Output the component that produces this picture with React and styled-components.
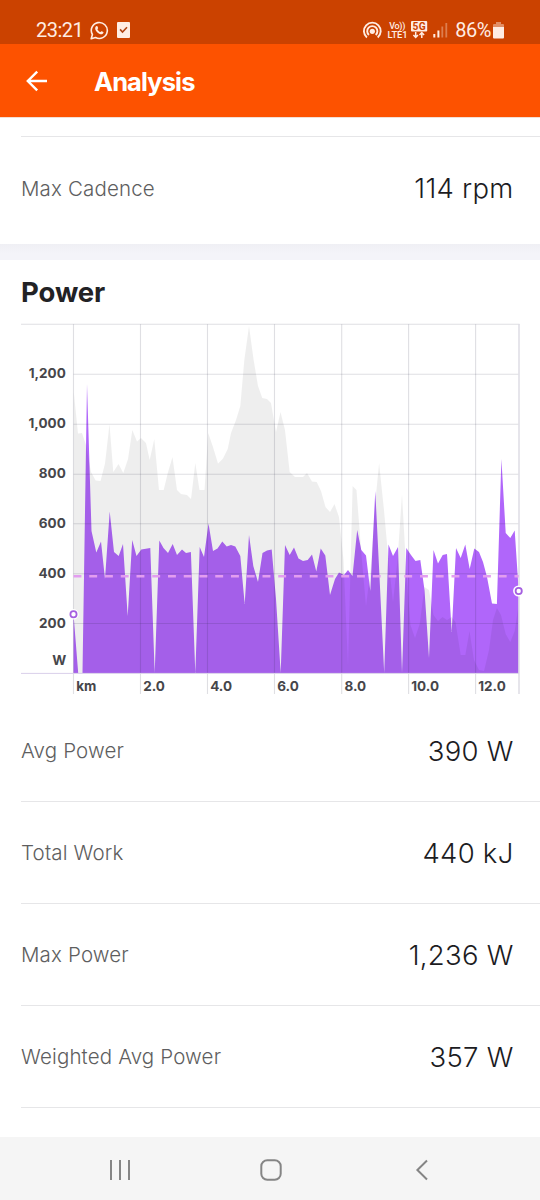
import React from 'react';
import styled, { createGlobalStyle } from 'styled-components';

const GlobalStyle = createGlobalStyle`
    body {
        margin: 0;
        background: #FFF;
    }
`;

// points are [x, y] on the 540px wide canvas, y starts at CHART_TOP
const CHART_TOP = 316;
const CHART_HEIGHT = 384;
const BASELINE = 673;
const AVG_LINE = 576.2;

const POWER = [
    [73.5, 614], [78.2, 673], [82.5, 673], [87, 384], [91.5, 531], [96.3, 552.5], [101, 541.5], [105, 579],
    [109.7, 511.5], [114, 552], [118.7, 556], [123, 544], [127.7, 616], [132.2, 540], [136.5, 556],
    [141.3, 549.5], [150.3, 548], [154.7, 673], [159.3, 540.5], [163.5, 548], [168, 553], [172.7, 544],
    [177, 555], [182, 549.5], [186, 553], [190.9, 552], [195.3, 673], [199.7, 547], [204, 557], [208.5, 523.5],
    [213, 551], [217.5, 548.5], [222.3, 541.5], [226.7, 546.5], [231, 545], [235.3, 546.5], [240.3, 556],
    [244.7, 604], [249, 535], [253.3, 566], [258, 582], [262.5, 553], [267, 550.5], [271.7, 549.5],
    [276, 599], [280.7, 673], [285, 545], [289.7, 555], [294, 547.5], [298.5, 558.5], [303, 561],
    [307.7, 560], [312, 554.5], [316.3, 571.5], [320.7, 548.5], [325.3, 555.5], [330, 595], [335, 579],
    [339, 572.5], [344, 575], [348, 570], [352.5, 576], [357.2, 530], [361.3, 550], [366, 555.5],
    [370.3, 591], [375.3, 491], [384.2, 673], [388.5, 544.5], [393, 556], [398, 547], [402, 673],
    [406.3, 548], [411, 555], [415.5, 561], [420.3, 560], [424.5, 590], [429, 658], [433.5, 550],
    [438, 563.5], [442.7, 555], [447, 554], [451.7, 632], [456, 548], [460.7, 558], [465.3, 544.5],
    [469.7, 569], [474.3, 548.5], [479, 552], [483, 562], [487, 577], [492, 603.5], [496.9, 604],
    [501.4, 459], [505.7, 533], [510.3, 538], [514.7, 530.5], [518.7, 591],
];

const ELEVATION = [
    [73.8, 392], [78, 433.5], [82, 433], [86, 445], [91, 472], [95.7, 480.5], [100.5, 481], [105, 463.5],
    [109.5, 424], [113.3, 472], [118.5, 464], [123.3, 473], [128, 459], [132.3, 430], [137, 441.5],
    [141, 438], [146, 443], [149.7, 460], [154.3, 439], [159, 490], [163.7, 490], [167.5, 474],
    [172.5, 457], [177, 490], [181, 494], [187, 495], [191, 499], [195.3, 463], [199.5, 490], [204.5, 490],
    [208.2, 433], [213, 447], [218, 463.5], [223, 458.5], [227.7, 449], [231, 433], [236, 420],
    [240.3, 406], [244.3, 360], [249, 326], [253.5, 359], [258, 386], [262.3, 398], [267, 399],
    [271, 403], [276, 432], [280.5, 412], [285, 430], [289.7, 472], [295, 477], [303, 477], [307, 473],
    [312, 481.5], [316.7, 482], [321, 491], [325.5, 507], [330, 512], [334.5, 504], [339, 517],
    [343.5, 560], [348, 665], [352.6, 486], [356.5, 490], [361.5, 555], [366, 606], [370.5, 570],
    [375, 505], [379.1, 463], [384, 510], [388.5, 560], [393, 602], [397.5, 560], [402, 494],
    [406.5, 575], [410.5, 625], [415, 638], [419.7, 624], [424.5, 587], [429, 590], [433.5, 615],
    [438, 621], [442.5, 617], [447, 620], [451.7, 617], [455.5, 622], [460.7, 655], [465.3, 655],
    [469.5, 631], [474, 660], [479, 670], [484, 671], [489, 650], [493, 620], [496.9, 608],
    [501, 615], [505.7, 634], [510.3, 642], [514.7, 631], [518.7, 604],
];

const Y_TICKS = [
    { y: 374.2, label: '1,200' },
    { y: 424.3, label: '1,000' },
    { y: 474.2, label: '800' },
    { y: 523.7, label: '600' },
    { y: 573.7, label: '400' },
    { y: 623.5, label: '200' },
];

const X_TICKS = [
    { x: 73.5, label: 'km' },
    { x: 140.5, label: '2.0' },
    { x: 207.5, label: '4.0' },
    { x: 274.5, label: '6.0' },
    { x: 341.7, label: '8.0' },
    { x: 408.6, label: '10.0' },
    { x: 475.6, label: '12.0' },
];

const STATS = [
    { label: 'Avg Power', value: '390 W' },
    { label: 'Total Work', value: '440 kJ' },
    { label: 'Max Power', value: '1,236 W' },
    { label: 'Weighted Avg Power', value: '357 W' },
];

const toArea = points => `M73.5 ${BASELINE} L${points.map(p => p.join(' ')).join(' L')} L518.7 ${BASELINE} Z`;

const Screen = styled.div`
    width: 540px;
    height: 1200px;
    display: flex;
    flex-direction: column;
    overflow: hidden;
    background: #FFF;
    font-family: Inter, "Liberation Sans", sans-serif;
`;

const StatusBar = styled.div`
    height: 44px;
    box-sizing: border-box;
    padding: 16px 36px 0 36px;
    display: flex;
    justify-content: space-between;
    background-color: #CB4200;
    color: #FFEDE3;
    font-family: Roboto, sans-serif;
    font-size: 20px;
    line-height: 28px;
`;

const StatusGroup = styled.div`
    display: flex;
    height: 28px;
    align-items: center;
    svg {
        display: block;
    }
`;

const Clock = styled.span`
    width: 54px;
    letter-spacing: -0.5px;
`;

const Battery = styled.span`
    margin: 0 2px 0 7px;
    letter-spacing: -0.5px;
`;

const Spacer = styled.span`
    width: 8px;
`;

const AppBar = styled.div`
    height: 74px;
    flex: none;
    display: flex;
    align-items: center;
    padding-left: 26px;
    background-color: #FD5200;
    border-bottom: 1px solid #F3DED4;
    box-sizing: border-box;
    color: #FFF;
`;

const Title = styled.h1`
    margin: 2px 0 0 46px;
    font-size: 25.5px;
    font-weight: 700;
    letter-spacing: -0.9px;
    line-height: 30px;
`;

const Content = styled.div`
    flex: 1;
    min-height: 0;
    padding-top: 18px;
`;

const StatRow = styled.div`
    height: ${props => (props.$first ? 108 : 102)}px;
    box-sizing: border-box;
    margin-left: 21px;
    padding-right: 27px;
    padding-bottom: ${props => (props.$first ? 5 : 0)}px;
    display: flex;
    align-items: center;
    justify-content: space-between;
    border-top: ${props => (props.$first ? '1px solid #E6E6E8' : 'none')};
    border-bottom: ${props => (props.$first ? 'none' : '1px solid #E6E6E8')};
`;

const StatLabel = styled.span`
    color: #5E5E60;
    font-size: 20.5px;
    font-weight: 350;
    letter-spacing: 0.15px;
`;

const StatValue = styled.span`
    color: #1C1C1F;
    font-size: 27.5px;
    font-weight: 340;
    letter-spacing: 0.25px;
    margin-right: -0.5px;
`;

const SectionGap = styled.div`
    height: 16px;
    background: linear-gradient(#EFEFF4, #F4F4F9 60%);
`;

const SectionTitle = styled.h2`
    margin: 0;
    height: 56px;
    box-sizing: border-box;
    padding: 16px 0 0 21px;
    color: #222225;
    font-size: 27.5px;
    font-weight: 700;
    line-height: 33px;
    letter-spacing: -0.1px;
`;

const Chart = styled.svg`
    display: block;
    text {
        fill: #46464A;
        font-size: 13.5px;
        font-weight: 700;
    }
`;

const NavBar = styled.div`
    height: 63px;
    flex: none;
    display: flex;
    align-items: center;
    justify-content: space-between;
    padding: 3px 111px 0 109px;
    box-sizing: border-box;
    background-color: #F5F5F5;
`;

const HomeButton = styled.span`
    height: 24px;
    margin-right: 4px;
`;

const WhatsAppIcon = () => (
    <svg width="19" height="19" viewBox="0 0 19 19" fill="none" stroke="#FFEDE3">
        <path d="M1.2 17.7 L2.4 13.5 A8 8 0 1 1 5.5 16.5 Z" strokeWidth="1.6" strokeLinejoin="round" />
        <path
            d="M6.2 5.3 C6.8 4.8 7.3 4.9 7.6 5.6 L8.1 6.9 C8.2 7.4 7.3 7.9 7.5 8.4 C8.1 9.6 9.1 10.5 10.4 11 C10.9 11.1 11.3 10.1 11.8 10.3 L13.3 11.1 C13.8 11.5 13.3 12.7 12.4 13.1 C10.9 13.7 8.6 12.7 7.1 11.2 C5.5 9.6 4.2 6.8 6.2 5.3 Z"
            fill="#FFEDE3"
            stroke="none"
        />
    </svg>
);

const TaskIcon = () => (
    <svg width="13" height="16" viewBox="0 0 13 16">
        <rect width="13" height="16" rx="1" fill="#FFEDE3" />
        <path d="M3.1 7.4 L5.5 10 L10 5.2" fill="none" stroke="#B14312" strokeWidth="1.6" />
    </svg>
);

const StatusIcons = () => (
    <svg width="86" height="22" viewBox="362 19 86 22" fill="none" stroke="#FFEDE3">
        <circle cx="372.3" cy="31.3" r="2.6" fill="#FFEDE3" stroke="none" />
        <path d="M368.9 35 A5.1 5.1 0 1 1 375.7 35" strokeWidth="1.9" />
        <path d="M366.9 37.5 A8.4 8.4 0 1 1 377.7 37.5" strokeWidth="1.9" />
        <g fill="#FFEDE3" stroke="none" fontFamily="Roboto, sans-serif" fontWeight="500">
            <text x="389.3" y="29" fontSize="9" textLength="16">Vo))</text>
            <text x="387.6" y="38" fontSize="9.4" textLength="20">LTE1</text>
            <rect x="411" y="21" width="16.2" height="10.4" rx="1" />
            <text x="412.6" y="29.8" fontSize="10.2" fontWeight="700" fill="#CB4200" textLength="13">5G</text>
        </g>
        <path d="M415.7 32 V37 M413.4 35 L415.7 37.4 L418 35 M421.8 38 V33 M419.5 35 L421.8 32.6 L424.1 35" strokeWidth="1.5" />
        <path d="M434.3 34 V37.6 M438.4 30.5 V37.6" strokeWidth="2" />
        <path d="M442.3 26.5 V37.6 M446.3 23 V37.6" strokeWidth="1.8" opacity="0.35" />
    </svg>
);

const BatteryIcon = () => (
    <svg width="11" height="17" viewBox="0 0 11 17">
        <path d="M3 0 H8 V2 H10 Q11 2 11 3 V5 H0 V3 Q0 2 1 2 H3 Z" fill="#FFEDE3" opacity="0.45" />
        <path d="M0 5 H11 V15.5 Q11 16.5 10 16.5 H1 Q0 16.5 0 15.5 Z" fill="#FFEDE3" />
    </svg>
);

const PowerChart = () => (
    <Chart width="540" height={CHART_HEIGHT} viewBox={`0 ${CHART_TOP} 540 ${CHART_HEIGHT}`}>
        <path d={toArea(POWER)} fill="#B066FA" stroke="#FFF" strokeWidth="0.8" paintOrder="stroke" />
        <path d={toArea(ELEVATION)} fill="#000" fillOpacity="0.067" />
        <g stroke="#2A2545" strokeOpacity="0.15" strokeWidth="1.1">
            {Y_TICKS.map(({ y }) => <path key={y} d={`M73.5 ${y} H518.7`} />)}
            {X_TICKS.map(({ x }) => <path key={x} d={`M${x} 324.3 V694`} />)}
            <path d="M21 324.3 H519.5" />
        </g>
        <path d="M519 324 V694" stroke="#DEDDE5" strokeWidth="1.5" />
        <path d={`M21 ${BASELINE + 0.4} H519`} stroke="#D9CFEA" />
        <path d={`M73.5 ${AVG_LINE} H518.7`} stroke="#E39DF0" strokeWidth="2.4" strokeDasharray="7.9 7.85" />
        <g fill="#FFF">
            <circle cx="73.5" cy="614.2" r="5.2" />
            <circle cx="518.7" cy="591" r="5.6" />
        </g>
        <g fill="#FFF" stroke="#A55FE0" strokeWidth="1.8">
            <circle cx="73.5" cy="614.2" r="3.1" />
            <circle cx="518.7" cy="591" r="3.1" />
        </g>
        {Y_TICKS.map(({ y, label }) => (
            <text key={label} x="65.8" y={y + 4.1} textAnchor="end">{label}</text>
        ))}
        <text x="66.2" y="665.3" textAnchor="end">W</text>
        {X_TICKS.map(({ x, label }) => (
            <text key={label} x={x + 2.7} y="691">{label}</text>
        ))}
    </Chart>
);

const App = () => (
    <Screen>
        <GlobalStyle />
        <StatusBar>
            <StatusGroup>
                <Clock>23:21</Clock>
                <WhatsAppIcon />
                <Spacer />
                <TaskIcon />
            </StatusGroup>
            <StatusGroup>
                <StatusIcons />
                <Battery>86%</Battery>
                <BatteryIcon />
            </StatusGroup>
        </StatusBar>
        <AppBar>
            <svg width="22" height="22" viewBox="0 0 22 22" fill="none" stroke="#FFF" strokeWidth="2.4">
                <path d="M21 11 H2 M11.2 1.6 L1.8 11 L11.2 20.4" />
            </svg>
            <Title>Analysis</Title>
        </AppBar>
        <Content>
            <StatRow $first>
                <StatLabel>Max Cadence</StatLabel>
                <StatValue>114 rpm</StatValue>
            </StatRow>
            <SectionGap />
            <SectionTitle>Power</SectionTitle>
            <PowerChart />
            {STATS.map(({ label, value }) => (
                <StatRow key={label}>
                    <StatLabel>{label}</StatLabel>
                    <StatValue>{value}</StatValue>
                </StatRow>
            ))}
        </Content>
        <NavBar>
            <svg width="22" height="22" viewBox="0 0 22 22" stroke="#858585" strokeWidth="2">
                <path d="M2 1 V21 M11 1 V21 M20 1 V21" />
            </svg>
            <HomeButton>
                <svg width="24" height="24" viewBox="0 0 24 24" fill="none" stroke="#858585" strokeWidth="2">
                    <rect x="2.3" y="2.3" width="19.4" height="19.4" rx="6" />
                </svg>
            </HomeButton>
            <svg width="14" height="22" viewBox="0 0 14 22" fill="none" stroke="#858585" strokeWidth="2">
                <path d="M12 1.5 L2.4 11 L12 20.5" />
            </svg>
        </NavBar>
    </Screen>
);

export default App;
